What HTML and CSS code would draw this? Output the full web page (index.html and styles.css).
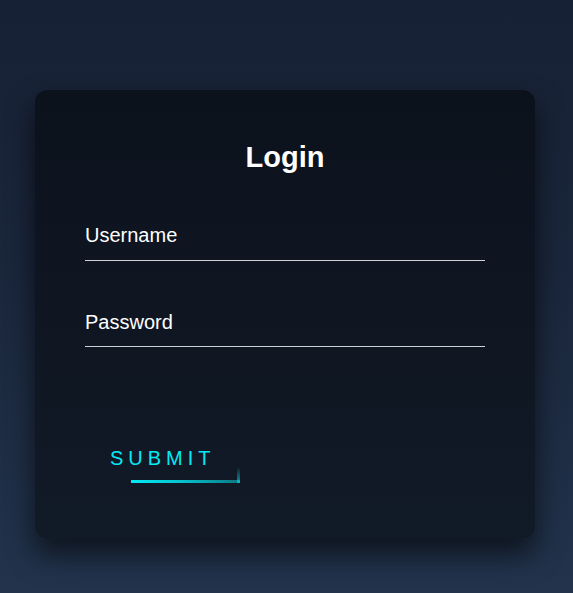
FILE: index.html
```html
<!DOCTYPE html>
<html lang="en">
<head>
<meta charset="utf-8">
<title>Login</title>
<link rel="stylesheet" href="styles.css">
</head>
<body>
<div class="page">
  <form class="card">
    <h2 class="title">Login</h2>
    <div class="field field-user">
      <label class="label">Username</label>
    </div>
    <div class="field field-pass">
      <label class="label">Password</label>
    </div>
    <a class="submit" href="#">
      <span class="edge-bottom"></span>
      <span class="edge-right"></span>
      SUBMIT
    </a>
  </form>
</div>
</body>
</html>
```
FILE: styles.css
```css
html, body {
  margin: 0;
  padding: 0;
}
body {
  font-family: "Liberation Sans", Arial, sans-serif;
  background: #1e2d45;
}
.page {
  min-height: 593px;
  background: linear-gradient(180deg, #172135 0%, #1a263b 45%, #22334c 100%);
  display: flex;
  justify-content: flex-start;
  align-items: flex-start;
  padding: 90px 0 0 35px;
  box-sizing: border-box;
}
.card {
  width: 500px;
  box-sizing: border-box;
  padding: 51px 50px 56px;
  border-radius: 12px;
  background: linear-gradient(180deg, #0c121c 0%, #0f1622 50%, #111a27 100%);
  box-shadow: 0 15px 28px rgba(0, 0, 0, 0.6);
}
.title {
  margin: 0 0 51px;
  text-align: center;
  color: #fff;
  font-size: 29px;
  font-weight: bold;
  line-height: 32px;
}
.field {
  border-bottom: 1px solid #cdd0d4;
}
.field-user {
  padding-bottom: 13px;
  margin-bottom: 50px;
}
.field-pass {
  padding-bottom: 12px;
}
.label {
  display: block;
  color: #fff;
  font-size: 20px;
  line-height: 23px;
}
.submit {
  position: relative;
  display: inline-block;
  margin-top: 90px;
  padding: 10px 24px 13px 25px;
  color: #03e9f4;
  font-size: 20px;
  line-height: 23px;
  letter-spacing: 5px;
  text-decoration: none;
}
.edge-bottom {
  position: absolute;
  right: 0;
  bottom: 0;
  width: 109px;
  height: 3px;
  background: linear-gradient(90deg, #03e9f4 0%, #07c4cf 45%, rgba(3, 233, 244, 0.45) 100%);
}
.edge-right {
  position: absolute;
  right: 0;
  bottom: 0;
  width: 3px;
  height: 16px;
  background: linear-gradient(0deg, rgba(3, 233, 244, 0.6), rgba(3, 233, 244, 0));
}
```
